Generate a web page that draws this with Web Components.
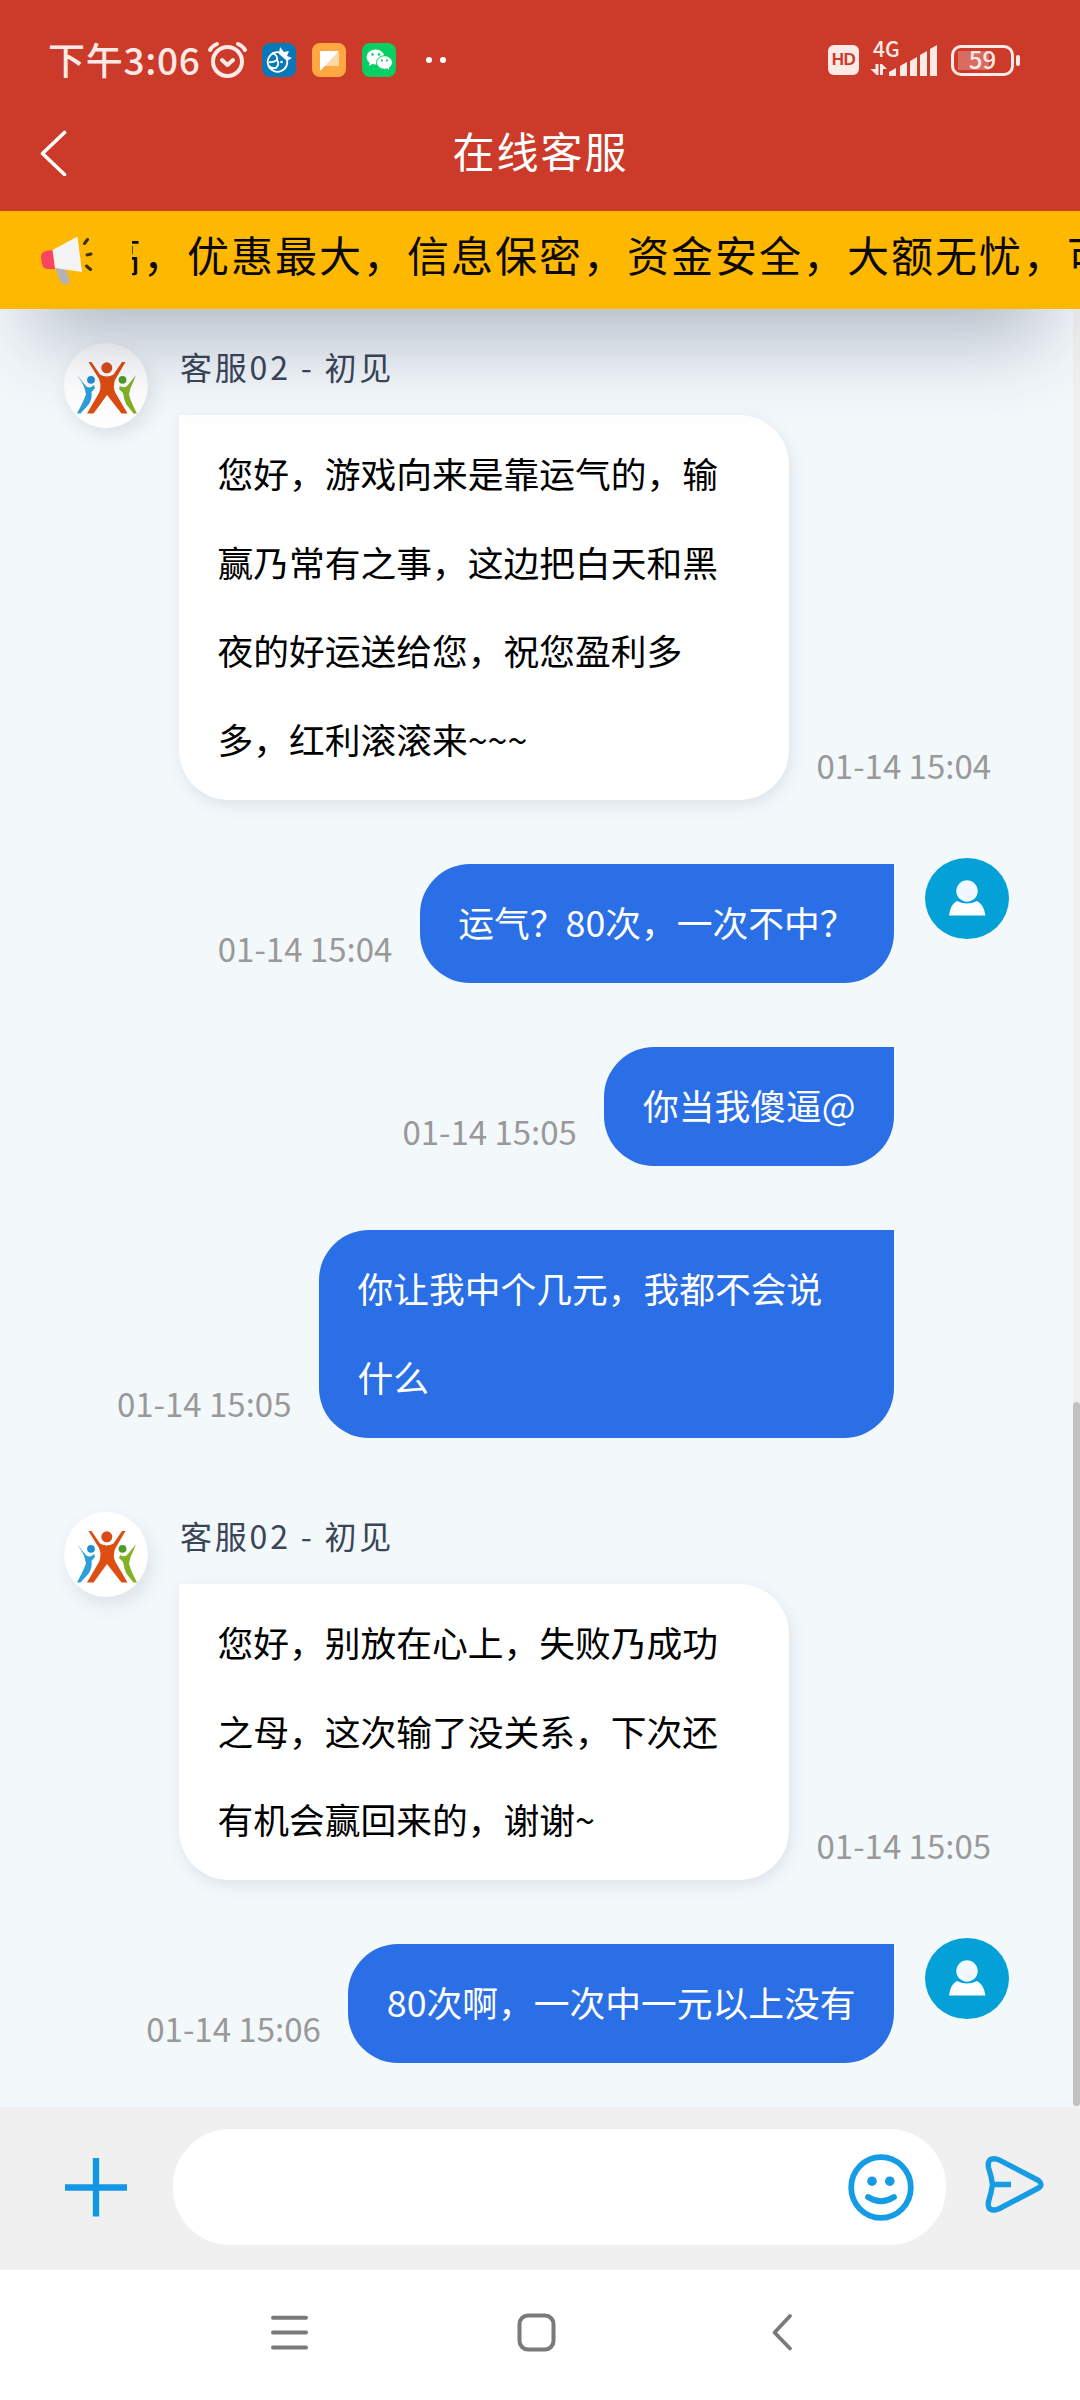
<!DOCTYPE html>
<html lang="zh-CN">
<head>
<meta charset="utf-8">
<title>在线客服</title>
<style>
html,body{margin:0;padding:0}
body{width:1080px;height:2400px;overflow:hidden;font-family:"Noto Sans CJK SC","Noto Sans",sans-serif;background:#f3f8fb}
</style>
</head>
<body>
<chat-app></chat-app>
<script>
const define = (name, html) => {
  const t = document.createElement('template');
  t.innerHTML = html;
  customElements.define(name, class extends HTMLElement {
    constructor() {
      super();
      this.attachShadow({ mode: 'open' }).appendChild(t.content.cloneNode(true));
    }
  });
};

define('status-bar', `
<style>
:host{display:flex;justify-content:space-between;align-items:flex-start;height:98px;box-sizing:border-box;padding:36px 60px 0 48px;color:#fdeae7}
.side{display:flex;align-items:center;height:48px}
.time{font-size:37px;font-weight:500;line-height:46px;height:48px;white-space:nowrap;width:159px;letter-spacing:.7px}
svg{display:block}
.net{display:flex;flex-direction:column;width:67px;height:40px;margin-left:11px;position:relative}
.net span{position:absolute;left:3px;top:-4px;font:500 21px/24px "Noto Sans CJK SC",sans-serif;letter-spacing:0}
.bat{display:flex;align-items:center;margin-left:14px}
.cell{width:63px;height:31px;border:3px solid #fdeae7;border-radius:10px;box-sizing:border-box;display:flex;align-items:center;justify-content:center;font:500 24px/24px "Noto Sans CJK SC",sans-serif;background:linear-gradient(#d96c60,#d96c60) 4px 50%/31px 19px no-repeat}
.cell span{display:block;height:26px}
.tip{width:4px;height:11px;border-radius:2px;background:#fdeae7;margin-left:2px}
.hd{width:31px;height:30px;border-radius:6px;background:#fdeae7;color:#cb3b28;font:700 17px/30px "Liberation Sans",sans-serif;text-align:center;letter-spacing:-.5px}
.right{height:48px}
</style>
<div class="side"><span class="time">下午3:06</span>
<svg width="250" height="48" viewBox="207 36 250 48">
 <g fill="none" stroke="#fdeae7" stroke-width="4" stroke-linecap="round" stroke-linejoin="round"><circle cx="227.500" cy="61.500" r="14.500"/><path d="M222 60l5.500 5L233 60M210 50q2-4 7-6M245 50q-2-4-7-6"/></g>
 <rect x="262" y="43" width="34" height="34" rx="8" fill="#0878b8"/>
 <g fill="none" stroke="#fff" stroke-width="1.800"><circle cx="277.500" cy="62" r="9.800"/><path d="M272 53q6 2 5 7q-4 3-8 2M277 60q3 4-1 8q-4 1-7-2"/></g><path d="M279 54l1-7l4 5l5-1l-2 5l5 2l-5 3z" fill="#fff"/><circle cx="281.500" cy="62" r="1.300" fill="#fff"/>
 <rect x="312" y="43" width="34" height="34" rx="8" fill="#ffa740"/><path d="M331 53h8v13h-15z" fill="#ffd9a5"/><path d="M320 51h19L320 71z" fill="#fff"/>
 <rect x="362" y="43" width="34" height="34" rx="8" fill="#07cf63"/>
 <ellipse cx="375.500" cy="57" rx="9" ry="7.500" fill="#fff"/><path d="M370 61l-1 5l5-3z" fill="#fff"/><ellipse cx="384.500" cy="62.500" rx="8" ry="6.800" fill="#fff" stroke="#07cf63"/><path d="M386 67l3 3v-5z" fill="#fff"/>
 <g fill="#07cf63"><circle cx="372.500" cy="54.500" r="1.300"/><circle cx="379" cy="54.500" r="1.300"/><circle cx="382" cy="60.500" r="1.100"/><circle cx="387" cy="60.500" r="1.100"/></g>
 <circle cx="429" cy="60" r="3" fill="#fff"/><circle cx="443" cy="60" r="3" fill="#fff"/>
</svg></div>
<div class="side right"><div class="hd">HD</div>
<div class="net"><span>4G</span><svg width="67" height="40" viewBox="870 40 67 40" fill="#fdeae7"><path d="M875.500 64h3v11h-2l-6-6h5zM880 75v-11h2l5 5h-4v6z"/><path d="M889 76v-4l7-4v8zM900 76v-10l7-4v14zM910 76v-15l7-4v19zM920 76v-21l7-4v25zM930 76v-27l7-4v31z"/></svg></div>
<div class="bat"><div class="cell"><span>59</span></div><div class="tip"></div></div></div>`);

define('title-bar', `
<style>
:host{display:flex;align-items:center;height:113px;box-sizing:border-box;padding:0 40px 4px;color:#fff}
svg{display:block;flex:none}
h1{flex:1;margin:0;text-align:center;font-size:42px;font-weight:400;letter-spacing:2px;line-height:60px;padding:0 27px 5px 0}
</style>
<svg width="28" height="46" viewBox="40 130 28 46" fill="none" stroke="#fff" stroke-width="3.600" stroke-linecap="round" stroke-linejoin="round"><path d="M64.500 132.500L42.500 153.500L64.500 174.500"/></svg>
<h1><slot></slot></h1>`);

define('notice-bar', `
<style>
:host{display:flex;align-items:center;height:98px;background:#ffb800;padding-left:38px;box-sizing:border-box;flex:none}
svg{display:block;flex:none}
.win{flex:1;margin-left:36px;overflow:hidden;white-space:nowrap;padding-bottom:13px}
.text{display:block;margin-left:-33px;font-size:42px;letter-spacing:2px;line-height:64px;color:#0a0800}
</style>
<svg width="58" height="56" viewBox="38 232 58 56">
 <path d="M55 266l11 4l4 11q-1 4-6 3q-4-1-5-5z" fill="#b3b3b3"/>
 <path d="M53 250l-7 1q-5 1-5 6l1 7q1 5 6 5h7z" fill="#fb4560"/>
 <path d="M52.500 250L77.500 236.500L82 272L55 268z" fill="#f4f4f4"/>
 <path d="M84.500 243.500l3-4M87 255l4-1M86.500 266l4 3.500" stroke="#38300f" stroke-width="3" stroke-linecap="round"/>
</svg>
<div class="win"><span class="text"><slot></slot></span></div>`);

define('agent-avatar', `
<style>:host{display:block;width:84px;height:85px;border-radius:50%;background:#fff;box-shadow:4px 8px 18px rgba(60,80,110,.12);flex:none}svg{display:block}</style>
<svg width="84" height="85" viewBox="64 343 84 85">
 <path d="M77 375l8 10q4 5 9 0l1 3l-3.500 4q1 6-2.500 12l-8.500 9.500h-3.500q6-11 9-19q-1-7-4-12z" fill="#2c9fdb"/><circle cx="91" cy="379.800" r="3.900" fill="#1f8fd6"/>
 <path d="M136 375l-8 10q-3 4-8 1l-1 3l4 4q1 6 3 11l7.500 9.500h3.500q-6-11-8-19q1-7 4-12z" fill="#82b222"/><circle cx="122.500" cy="379.800" r="3.900" fill="#4f9b25"/>
 <path d="M88.500 362h3l8.500 12.500q6.800 4 13.500 0l8.500-12.500h3.500l-10.500 18q-2.500 7 .5 13l12 20.500h-6l-14.500-18.500l-13.500 18.500h-6.500l12-20.500q3-7 0-14z" fill="#de4d12"/><circle cx="106.800" cy="367.800" r="5.500" fill="#da4b18"/>
</svg>`);

define('user-avatar', `
<style>:host{display:block;width:84px;height:81px;flex:none}svg{display:block}</style>
<svg width="84" height="81" viewBox="0 0 84 81"><ellipse cx="42" cy="40.500" rx="42" ry="40.500" fill="#03a1d8"/>
<path d="M24 57.500q1-11 8-14.500q10 5 20 0q7 3.500 8.500 14.500z" fill="#fff"/><circle cx="42" cy="33" r="10.700" fill="#f0f9ff"/></svg>`);

const bubbleCss = `
.bubble{box-sizing:border-box;padding:14px 38.500px 16px;font-size:35.750px;line-height:88.700px;white-space:normal;flex:none}
.time{font-size:33px;line-height:48px;color:#999;margin-bottom:11px;white-space:nowrap;flex:none}`;

define('agent-message', `
<style>${bubbleCss}
:host{display:flex;gap:31px;padding-left:64px;align-items:flex-start}
.name{font-size:32px;letter-spacing:2.800px;line-height:46px;height:72px;color:#3a4557;white-space:nowrap;padding-left:1px;box-sizing:border-box}
.row{display:flex;align-items:flex-end;gap:27.500px}
.bubble{width:610px;background:#fff;color:#000;border-radius:0 50px 50px 50px;box-shadow:2px 5px 16px rgba(60,80,110,.12)}
</style>
<agent-avatar></agent-avatar>
<div><div class="name"><slot name="name"></slot></div>
<div class="row"><div class="bubble"><slot></slot></div><div class="time"><slot name="time"></slot></div></div></div>`);

define('user-message', `
<style>${bubbleCss}
:host{display:flex;justify-content:flex-end;padding-right:64px;align-items:flex-start}
.row{display:flex;align-items:flex-end;gap:27.500px}
.bubble{max-width:575px;background:#2b6fe6;color:#fff;border-radius:50px 0 50px 50px}
.av{width:84px;height:0;margin:-6px 0 0 31px}
</style>
<div class="row"><div class="time"><slot name="time"></slot></div><div class="bubble"><slot></slot></div></div>
<div class="av"><slot name="avatar"></slot></div>`);

define('scroll-track', `
<style>:host{display:flex;flex-direction:column;justify-content:flex-end;width:7px;background:#f0f0f0;flex:none}div{height:704px;border-radius:3.500px;background:#c1c1c1;margin-bottom:1px}</style><div></div>`);

define('input-bar', `
<style>
:host{display:flex;align-items:flex-start;height:163px;background:#f0f0f0;box-sizing:border-box;padding:22px 36px 0 65px;flex:none}
svg{display:block;flex:none}
.plus{margin:29px 46px 0 0}
.field{flex:none;width:773px;height:116px;border-radius:57px;background:#fff;box-sizing:border-box;display:flex;justify-content:flex-end;align-items:center;padding-right:32px}
.send{margin:26px 0 0 38px}
</style>
<svg class="plus" width="62" height="60" viewBox="0 0 62 60"><path d="M0 29.500h62M31 0v58.500" stroke="#1296e6" stroke-width="6.300"/></svg>
<div class="field"><svg width="66" height="67" viewBox="849 2153.500 66 67" fill="none" stroke="#169be5" stroke-width="5.800" stroke-linecap="round"><ellipse cx="882" cy="2187" rx="29.800" ry="30.300"/><path d="M869 2196.500q13 8.500 26 0"/><g fill="#169be5" stroke="none"><circle cx="873" cy="2180.700" r="4.800"/><circle cx="890.800" cy="2180.700" r="4.800"/></g></svg></div>
<svg class="send" width="60" height="60" viewBox="984 2155 60 60" fill="none" stroke="#169be5" stroke-width="5.400" stroke-linejoin="round"><path d="M992.500 2184.500q-1-8-4-17q-1.500-9 6-8.800q2 0 5 1.500l39 20.300q5 4 0 7.500l-39 20.500q-3 1.500-5 1.500q-7.500.500-6-8.500q3-9 4-17zM992.500 2184.500h18.500"/></svg>`);

define('nav-bar', `
<style>:host{display:flex;align-items:flex-start;height:130px;background:#fff;box-sizing:border-box;padding:42px 0 0 269px;flex:none}svg{display:block}.home{margin:0 214px 0 205px}</style>
<svg width="41" height="41" viewBox="0 0 41 41" stroke="#7a7a7a" stroke-width="4" stroke-linecap="round"><path d="M4 5.700h33M4 20.500h33M4 35.500h33"/></svg>
<svg class="home" width="41" height="41" viewBox="0 0 41 41" fill="none" stroke="#7a7a7a" stroke-width="4"><rect x="4.500" y="3.500" width="34" height="34" rx="8.500"/></svg>
<svg width="24" height="41" viewBox="0 0 24 41" fill="none" stroke="#7a7a7a" stroke-width="3.800" stroke-linecap="round" stroke-linejoin="round"><path d="M20 4L4.500 20.500L20 36.500"/></svg>`);

define('chat-app', `
<style>
:host{display:flex;flex-direction:column;width:1080px;height:2400px;overflow:hidden}
header{background:#cc3b29;flex:none;position:relative;z-index:2;box-shadow:0 66px 76px -35px rgba(32,42,75,.3)}
main{display:flex;flex:1;min-height:0}
.list{flex:1;background:#f3f8fb;padding-top:34px;display:flex;flex-direction:column;gap:64.300px;min-width:0}
.later{margin-top:10px}
</style>
<header><status-bar></status-bar><title-bar>在线客服</title-bar>
<notice-bar>高，优惠最大，信息保密，资金安全，大额无忧，可</notice-bar></header>
<main><div class="list">
<agent-message><span slot="name">客服02 - 初见</span>您好，游戏向来是靠运气的，输赢乃常有之事，这边把白天和黑夜的好运送给您，祝您盈利多多，红利滚滚来~~~<span slot="time">01-14 15:04</span></agent-message>
<user-message>运气？80次，一次不中？<span slot="time">01-14 15:04</span><user-avatar slot="avatar"></user-avatar></user-message>
<user-message>你当我傻逼@<span slot="time">01-14 15:05</span></user-message>
<user-message>你让我中个几元，我都不会说什么<span slot="time">01-14 15:05</span></user-message>
<agent-message class="later"><span slot="name">客服02 - 初见</span>您好，别放在心上，失败乃成功之母，这次输了没关系，下次还有机会赢回来的，谢谢~<span slot="time">01-14 15:05</span></agent-message>
<user-message>80次啊，一次中一元以上没有<span slot="time">01-14 15:06</span><user-avatar slot="avatar"></user-avatar></user-message>
</div><scroll-track></scroll-track></main>
<input-bar></input-bar>
<nav-bar></nav-bar>`);
</script>
</body>
</html>
